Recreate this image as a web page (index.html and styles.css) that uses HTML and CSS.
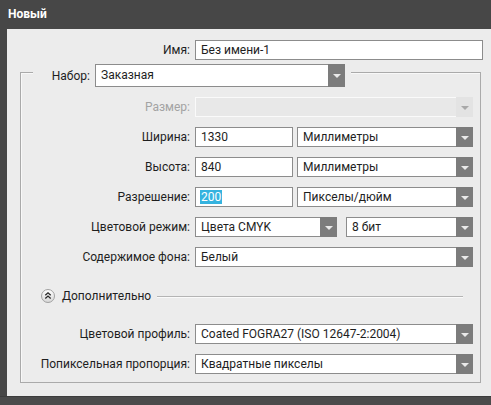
FILE: index.html
```html
<!DOCTYPE html>
<html lang="ru">
<head>
<meta charset="utf-8">
<title>Новый</title>
<link rel="stylesheet" href="styles.css">
</head>
<body>
<div class="window">
  <div class="titlebar">Новый</div>
  <div class="main">
    <div class="row top-row">
      <span class="lbl lbl-top">Имя:</span>
      <div class="input w-name">Без имени-1</div>
    </div>
    <div class="group">
      <div class="group-head">
        <span class="lbl lbl-set">Набор:</span>
        <div class="select big w-set"><span class="val">Заказная</span><span class="arrow"><i></i></span></div>
      </div>
      <div class="rows">
        <div class="row">
          <span class="lbl disabled-lbl">Размер:</span>
          <div class="select disabled w-full"><span class="val"></span><span class="arrow"><i></i></span></div>
        </div>
        <div class="row">
          <span class="lbl">Ширина:</span>
          <div class="input w-num">1330</div>
          <div class="select w-unit"><span class="val">Миллиметры</span><span class="arrow"><i></i></span></div>
        </div>
        <div class="row">
          <span class="lbl">Высота:</span>
          <div class="input w-num">840</div>
          <div class="select w-unit"><span class="val">Миллиметры</span><span class="arrow"><i></i></span></div>
        </div>
        <div class="row">
          <span class="lbl">Разрешение:</span>
          <div class="input w-num"><span class="sel">200</span></div>
          <div class="select w-unit"><span class="val">Пикселы/дюйм</span><span class="arrow"><i></i></span></div>
        </div>
        <div class="row">
          <span class="lbl">Цветовой режим:</span>
          <div class="select w-mode"><span class="val">Цвета CMYK</span><span class="arrow"><i></i></span></div>
          <div class="select w-bits"><span class="val">8 бит</span><span class="arrow"><i></i></span></div>
        </div>
        <div class="row">
          <span class="lbl">Содержимое фона:</span>
          <div class="select w-full"><span class="val">Белый</span><span class="arrow"><i></i></span></div>
        </div>
        <div class="adv">
          <svg class="adv-icon" width="14" height="14" viewBox="0 0 14 14">
            <defs>
              <linearGradient id="g" x1="0" y1="0" x2="0" y2="1">
                <stop offset="0" stop-color="#ffffff"/>
                <stop offset="1" stop-color="#d6d6d6"/>
              </linearGradient>
            </defs>
            <circle cx="7" cy="7" r="6.5" fill="url(#g)" stroke="#a0a0a0"/>
            <path d="M4.3 6.3 L7 3.8 L9.7 6.3 M4.3 9.6 L7 7.1 L9.7 9.6" fill="none" stroke="#2a2a2a" stroke-width="1.3"/>
          </svg>
          <span class="adv-text">Дополнительно</span>
          <span class="adv-line"></span>
        </div>
        <div class="row">
          <span class="lbl">Цветовой профиль:</span>
          <div class="select w-full"><span class="val">Coated FOGRA27 (ISO 12647-2:2004)</span><span class="arrow"><i></i></span></div>
        </div>
        <div class="row">
          <span class="lbl">Попиксельная пропорция:</span>
          <div class="select w-full"><span class="val">Квадратные пикселы</span><span class="arrow"><i></i></span></div>
        </div>
      </div>
    </div>
  </div>
  <div class="bottombar"></div>
</div>
</body>
</html>
```

FILE: styles.css
```css
html, body {
  margin: 0;
  padding: 0;
}
body {
  font-family: Roboto, "Noto Sans", "DejaVu Sans", sans-serif;
  font-size: 12px;
  color: #1e1e1e;
}
.window {
  width: 491px;
  height: 405px;
  background: #474747;
  display: flex;
  flex-direction: column;
  overflow: hidden;
}
.titlebar {
  height: 29px;
  line-height: 29px;
  padding-left: 8px;
  color: #ffffff;
  font-weight: bold;
  font-size: 12px;
  flex: none;
}
.main {
  margin-left: 7px;
  height: 367px;
  box-sizing: border-box;
  padding-top: 11px;
  background: #ececec;
  flex: none;
}
.bottombar {
  height: 9px;
  background: #4b4b4b;
  border-top: 1px solid #3c3c3c;
  box-sizing: border-box;
  flex: none;
}
.row {
  display: flex;
  align-items: center;
  height: 20px;
}
.lbl {
  flex: none;
  width: 169px;
  text-align: right;
  padding-right: 5px;
  box-sizing: content-box;
  white-space: nowrap;
  line-height: 16px;
}
.lbl-top {
  width: 183px;
}
.disabled-lbl {
  color: #a3a3a3;
}
.input, .select {
  box-sizing: border-box;
  height: 20px;
  border: 1px solid #8c8c8c;
  background: #ffffff;
  flex: none;
}
.input {
  padding-left: 5px;
  line-height: 18px;
  white-space: nowrap;
}
.sel {
  display: inline-block;
  background: #35b3df;
  color: #ffffff;
  line-height: 14px;
  padding: 0 1px;
  margin-left: -1px;
}
.select {
  display: flex;
  align-items: stretch;
}
.select .val {
  flex: 1;
  padding-left: 5px;
  line-height: 18px;
  white-space: nowrap;
  overflow: hidden;
}
.select .arrow {
  flex: none;
  width: 17px;
  margin: -1px -1px -1px 0;
  background: #7c7c7c;
  display: flex;
  align-items: center;
  justify-content: center;
}
.select .arrow i {
  display: block;
  width: 0;
  height: 0;
  border-left: 4px solid transparent;
  border-right: 4px solid transparent;
  border-top: 4px solid #e9e9e9;
  margin-top: 1px;
}
.select.disabled {
  background: #e8e8e8;
  border-color: #fafafa;
}
.select.disabled .arrow {
  background: #e3e3e3;
}
.select.disabled .arrow i {
  border-top-color: #a8a8a8;
}
.w-name { width: 288px; }
.w-full { width: 278px; }
.w-num { width: 98px; margin-right: 4px; }
.w-unit { width: 176px; }
.w-mode { width: 142px; margin-right: 9px; }
.w-bits { width: 127px; }
.group {
  margin-top: 12px;
  margin-left: 13px;
  width: 461px;
  box-sizing: border-box;
  border: 1px solid #aaaaaa;
  box-shadow: inset 1px 1px 0 #f8f8f8;
  padding-bottom: 8px;
}
.group-head {
  margin-top: -9px;
  margin-left: 12px;
  width: 318px;
  height: 23px;
  background: #ececec;
  display: flex;
  align-items: center;
}
.lbl-set {
  width: 57px;
}
.select.big {
  height: 23px;
}
.select.big .val {
  line-height: 21px;
}
.w-set { width: 250px; }
.rows {
  padding-top: 10px;
  display: flex;
  flex-direction: column;
  gap: 10px;
}
.adv {
  display: flex;
  align-items: center;
  height: 18px;
  margin-top: 10px;
  margin-bottom: 9px;
  padding-left: 20px;
  padding-right: 17px;
}
.adv-icon {
  flex: none;
  display: block;
}
.adv-text {
  margin-left: 7px;
  margin-right: 6px;
  white-space: nowrap;
  line-height: 16px;
}
.adv-line {
  flex: 1;
  height: 1px;
  background: #b4b4b4;
  box-shadow: 0 1px 0 #fafafa;
}
```
